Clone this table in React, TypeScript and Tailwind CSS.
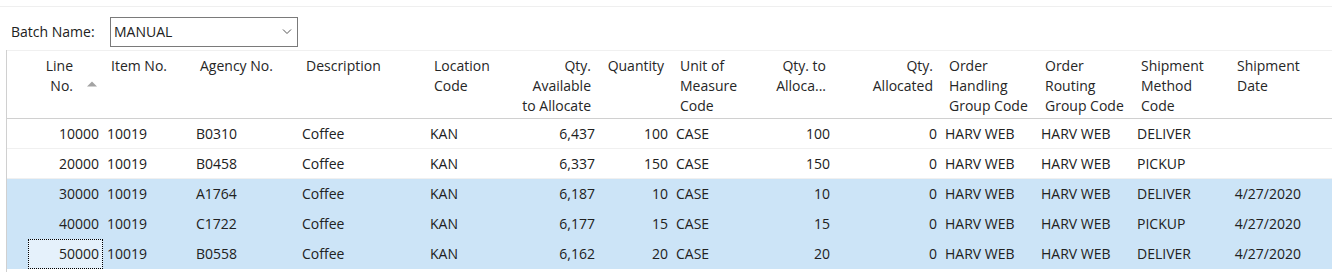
import React from "react";

type Col = {
  h: string[];
  w: number;
  hAlign: "left" | "right";
  dAlign: "left" | "right";
  sort?: boolean;
};

const cols: Col[] = [
  { h: ["Line", "No."], w: 75, hAlign: "right", dAlign: "right", sort: true },
  { h: ["Item No."], w: 89, hAlign: "left", dAlign: "left" },
  { h: ["Agency No."], w: 106, hAlign: "left", dAlign: "left" },
  { h: ["Description"], w: 128, hAlign: "left", dAlign: "left" },
  { h: ["Location", "Code"], w: 84, hAlign: "left", dAlign: "left" },
  { h: ["Qty.", "Available", "to Allocate"], w: 89, hAlign: "right", dAlign: "right" },
  { h: ["Quantity"], w: 73, hAlign: "right", dAlign: "right" },
  { h: ["Unit of", "Measure", "Code"], w: 92, hAlign: "left", dAlign: "left" },
  { h: ["Qty. to", "Alloca..."], w: 70, hAlign: "right", dAlign: "right" },
  { h: ["Qty.", "Allocated"], w: 107, hAlign: "right", dAlign: "right" },
  { h: ["Order", "Handling", "Group Code"], w: 96, hAlign: "left", dAlign: "left" },
  { h: ["Order", "Routing", "Group Code"], w: 96, hAlign: "left", dAlign: "left" },
  { h: ["Shipment", "Method", "Code"], w: 96, hAlign: "left", dAlign: "left" },
  { h: ["Shipment", "Date"], w: 76, hAlign: "left", dAlign: "right" },
];

const rows: { cells: string[]; selected: boolean; focus?: boolean }[] = [
  { cells: ["10000", "10019", "B0310", "Coffee", "KAN", "6,437", "100", "CASE", "100", "0", "HARV WEB", "HARV WEB", "DELIVER", ""], selected: false },
  { cells: ["20000", "10019", "B0458", "Coffee", "KAN", "6,337", "150", "CASE", "150", "0", "HARV WEB", "HARV WEB", "PICKUP", ""], selected: false },
  { cells: ["30000", "10019", "A1764", "Coffee", "KAN", "6,187", "10", "CASE", "10", "0", "HARV WEB", "HARV WEB", "DELIVER", "4/27/2020"], selected: true },
  { cells: ["40000", "10019", "C1722", "Coffee", "KAN", "6,177", "15", "CASE", "15", "0", "HARV WEB", "HARV WEB", "PICKUP", "4/27/2020"], selected: true },
  { cells: ["50000", "10019", "B0558", "Coffee", "KAN", "6,162", "20", "CASE", "20", "0", "HARV WEB", "HARV WEB", "DELIVER", "4/27/2020"], selected: true, focus: true },
];

export default function App() {
  return (
    <div
      className="w-[1332px] h-[272px] bg-white text-[#212121] overflow-hidden text-[14px]"
      style={{ fontFamily: '"Open Sans", "Noto Sans", sans-serif' }}
    >
      <div className="h-[7px] border-b border-[#efefef]" />
      <div className="h-[43px] flex items-start pt-[10px]">
        <div className="w-[110px] pl-[11px] h-[30px] flex items-center leading-[20px]">
          Batch Name:
        </div>
        <div className="w-[188px] h-[30px] border border-[#7a7a7a] flex items-center justify-between pl-[3px] pr-[5px] leading-[20px]">
          <span>MANUAL</span>
          <svg width="10" height="6" viewBox="0 0 10 6" className="mr-[0px]">
            <path d="M1 0.5 L5 4.5 L9 0.5" fill="none" stroke="#555" strokeWidth="1" />
          </svg>
        </div>
      </div>
      <div className="ml-[6px] border-l border-[#d0d0d0] h-[222px]">
        {/* header */}
        <div className="flex h-[69px] border-t border-b border-t-[#f0f0f0] border-b-[#d0d0d0] text-[#262626] leading-[20px]">
          <div className="w-[21px] shrink-0" />
          {cols.map((c, i) => (
            <div
              key={i}
              className={`shrink-0 pt-[5px] relative ${c.hAlign === "right" ? "text-right" : "text-left"} ${c.sort ? "pl-[8px] pr-[30px]" : "px-[8px]"}`}
              style={{ width: c.w }}
            >
              {c.h.map((l, j) => (
                <div key={j} className="whitespace-nowrap">{l}</div>
              ))}
              {c.sort && (
                <svg width="10" height="6" viewBox="0 0 10 6" className="absolute left-[59px] top-[30px]">
                  <path d="M0 5.5 L5 0.5 L10 5.5 Z" fill="#a3a3a3" />
                </svg>
              )}
            </div>
          ))}
          <div className="flex-1" />
        </div>
        {/* rows */}
        {rows.map((r, ri) => (
          <div
            key={ri}
            className={`flex h-[30px] leading-[20px] ${r.selected ? "bg-[#cce4f7]" : "bg-white border-b border-[#f0f0f0]"}`}
          >
            <div className="w-[21px] shrink-0" />
            {cols.map((c, i) => {
              const isFocus = r.focus && i === 0;
              return (
                <div
                  key={i}
                  className={`shrink-0 flex items-center px-[4px] whitespace-nowrap ${c.dAlign === "right" ? "justify-end" : "justify-start"} ${isFocus ? "border border-dotted border-black bg-[#e5f1fb] pr-[3px]" : ""}`}
                  style={{ width: c.w }}
                >
                  {r.cells[i]}
                </div>
              );
            })}
            <div className="flex-1" />
          </div>
        ))}
      </div>
    </div>
  );
}
